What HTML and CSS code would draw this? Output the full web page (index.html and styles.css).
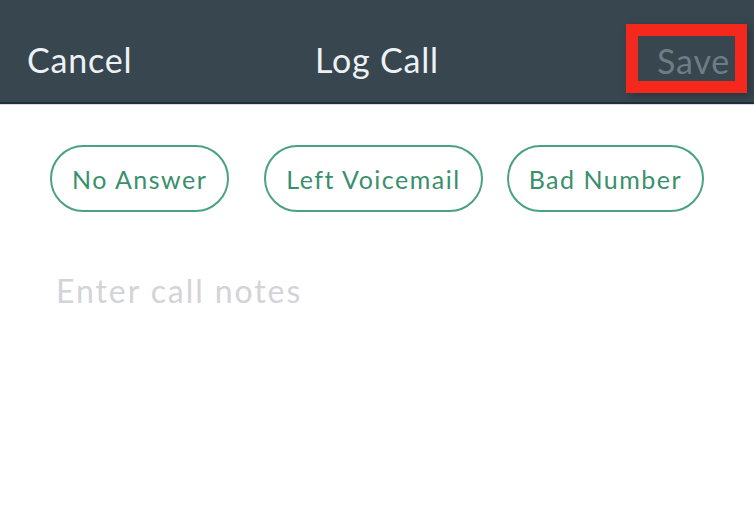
FILE: index.html
```html
<!DOCTYPE html>
<html lang="en">
<head>
    <meta charset="UTF-8">
    <meta name="viewport" content="width=device-width, initial-scale=1.0">
    <title>Log Call</title>
    <link rel="stylesheet" href="styles.css">
</head>
<body>
    <header class="nav-bar">
        <button class="nav-btn cancel">Cancel</button>
        <h1 class="nav-title">Log Call</h1>
        <button class="nav-btn save" disabled>Save</button>
    </header>

    <div class="chips">
        <button class="chip first">No Answer</button>
        <button class="chip">Left Voicemail</button>
        <button class="chip">Bad Number</button>
    </div>

    <textarea class="notes" placeholder="Enter call notes"></textarea>
</body>
</html>
```

FILE: styles.css
```css
body {
    margin: 0;
    background: #fff;
    font-family: Lato, "Open Sans", sans-serif;
    letter-spacing: 0.05em;
}
.nav-bar {
    height: 104px;
    box-sizing: border-box;
    background-color: #37464f;
    border-bottom: 2px solid #1e2f3c;
    box-shadow: 0 1px 0 #d9dcdf;
    display: flex;
    align-items: center;
    justify-content: space-between;
    padding: 16px 19px 0 27px;
    position: relative;
}
.nav-btn {
    background: none;
    border: none;
    padding: 0;
    font-family: inherit;
    letter-spacing: inherit;
    font-size: 34px;
    color: #eef1f3;
}
.nav-title {
    position: absolute;
    left: 0;
    right: 0;
    top: 16px;
    bottom: 0;
    display: flex;
    align-items: center;
    justify-content: center;
    margin: 0;
    font-size: 34px;
    font-weight: normal;
    color: #eef1f3;
    pointer-events: none;
}
.save {
    width: 97px;
    height: 45px;
    margin-top: -2px;
    color: #6e7c85;
    text-align: right;
    padding: 4px 5px 0 0;
    outline: 12px solid #f5281e;
    box-shadow: 3px 3px 8px 12px rgba(0, 0, 0, 0.25);
}
.chips {
    display: flex;
    gap: 24px;
    padding: 41px 0 0 50px;
}
.chip {
    height: 67px;
    padding: 0 20px;
    border: 2px solid #4aa281;
    border-radius: 34px;
    background: #fff;
    color: #3a8f6d;
    font-family: inherit;
    letter-spacing: 0.06em;
    font-size: 25px;
}
.chip.first {
    margin-right: 11px;
}
.notes {
    display: block;
    width: calc(100% - 112px);
    margin: 59px 0 0 56px;
    height: 180px;
    padding: 0;
    border: none;
    outline: none;
    resize: none;
    font-family: inherit;
    letter-spacing: 0.06em;
    font-size: 32px;
    color: #333;
}
.notes::placeholder {
    color: #d3d3d8;
}
```
